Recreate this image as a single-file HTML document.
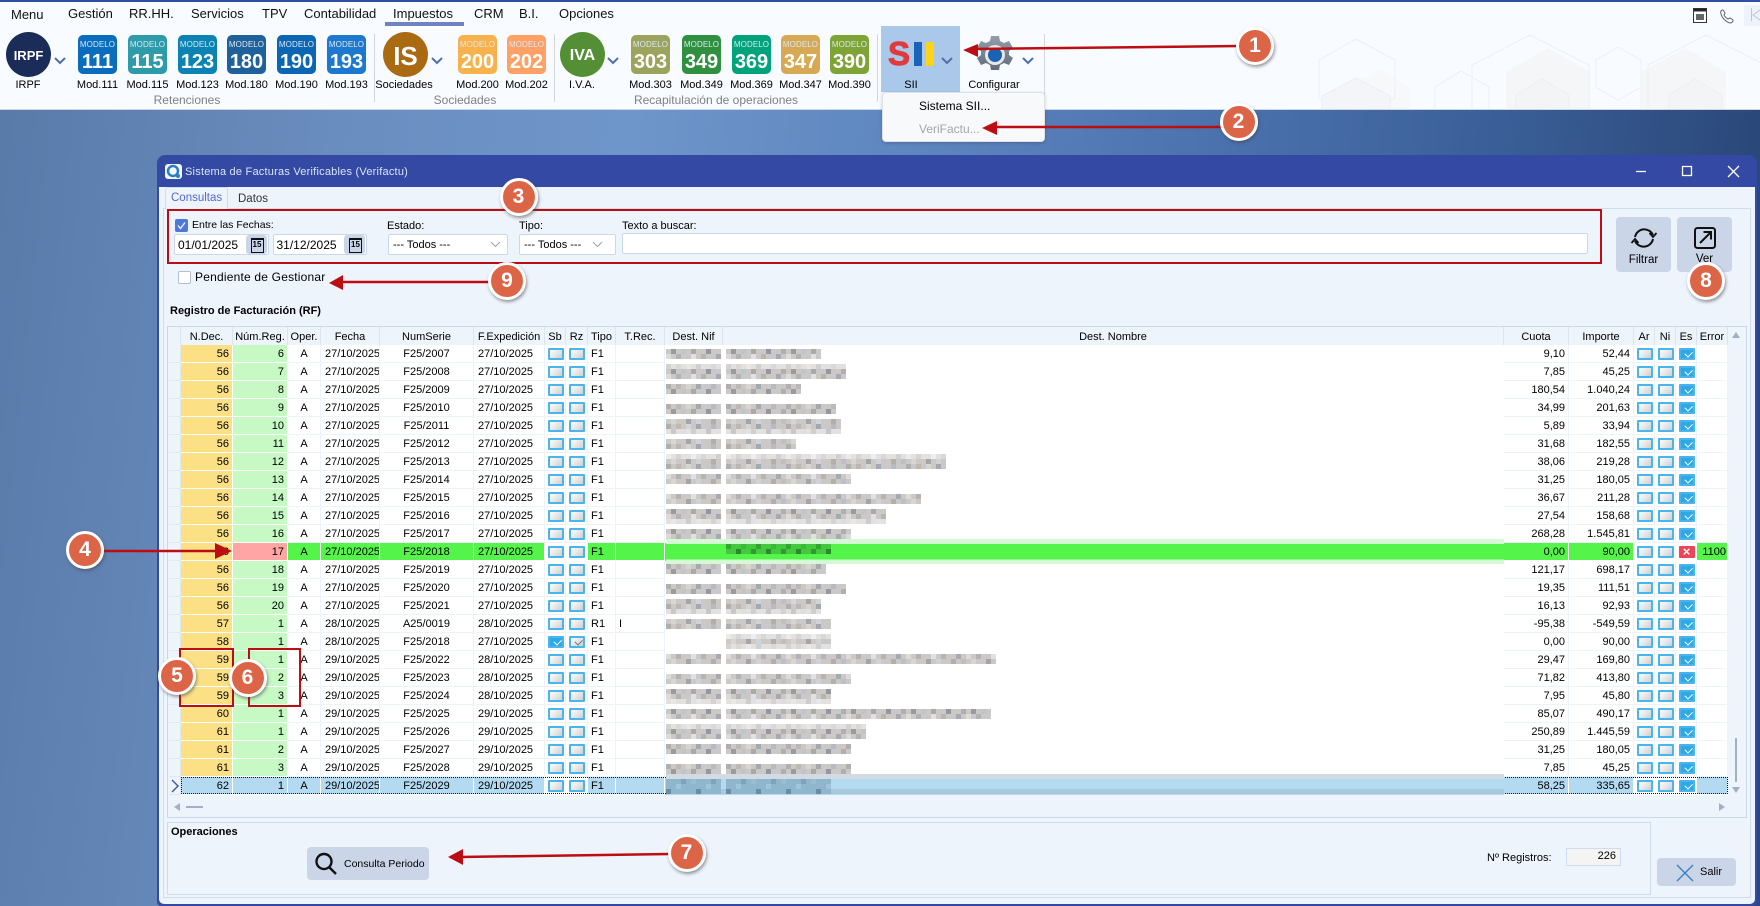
<!DOCTYPE html>
<html lang="es"><head><meta charset="utf-8"><title>Verifactu</title>
<style>
*{box-sizing:border-box;margin:0;padding:0}
html,body{width:1760px;height:906px;overflow:hidden}
body{position:relative;font-family:"Liberation Sans",sans-serif;font-size:11px;color:#000;background:linear-gradient(96deg,#587aa9 0,#6a8dbf 350px,#6f96ca 640px,#5f87c0 900px,#4b71ad 1240px,#3a5f98 1500px,#2b487a 1760px)}
.a{position:absolute}
.t{position:absolute;white-space:nowrap}
#rb{left:0;top:0;width:1760px;height:110px;background:#f8fbff;border-top:2px solid #2f4fa0;border-bottom:1px solid #cfd6e0}
.m{position:absolute;top:6px;font-size:13px;line-height:16px;color:#111;white-space:nowrap}
.ti{position:absolute;top:35px;width:39px;height:39px;border-radius:5px;color:#fff;text-align:center;overflow:hidden}
.ti s{display:block;text-decoration:none;font-size:8px;line-height:10px;margin-top:5px;color:#dbe8f3;letter-spacing:.1px}
.ti b{display:block;font-size:20px;line-height:22px;margin-top:1px}
.lb{position:absolute;top:78px;width:60px;text-align:center;font-size:11px;line-height:14px;color:#000;white-space:nowrap}
.gl{position:absolute;top:93px;font-size:12px;line-height:14px;color:#808080;text-align:center;white-space:nowrap}
.sp{position:absolute;top:34px;width:1px;height:68px;background:#d3d7dc}
.ci{position:absolute;top:32px;width:45px;height:45px;border-radius:50%;color:#fff;font-weight:bold;text-align:center;line-height:48px}
#win{left:157px;top:155px;width:1600px;height:751px;background:#3349a3;border-radius:8px 8px 4px 4px}
#cw{left:158.5px;top:187px;width:1596px;height:717px;background:#eef4fc;border-radius:0 0 5px 5px}
.in{position:absolute;background:#fff;border:1px solid #cbd8ea;border-radius:2px;height:21px;font-size:12px;line-height:20px;padding-left:3px;white-space:nowrap}
.cal{position:absolute;width:21px;height:19px;top:235px;background:#cbd5e8;border-radius:3px}
.cal:after{content:"15";position:absolute;left:5px;top:3px;width:11px;height:12px;border:1px solid #111;border-top-width:2px;font-size:8px;line-height:9px;text-align:center;font-weight:bold}
.btn{position:absolute;background:#cbd5e8;border-radius:4px}
#g{left:167px;top:326px;width:1580px;height:492px;border:1px solid #ccd9ea}
table{position:absolute;left:169px;top:327px;border-collapse:separate;border-spacing:0;table-layout:fixed;width:1559px;font-size:11px}
th{height:18px;font-weight:normal;background:#eef4fc;border-right:1px solid #dbe5f2;line-height:16px;padding:2px 0 0;white-space:nowrap;overflow:hidden}
td{height:18px;background:#fff;border-right:1px solid #ecf3fb;border-bottom:1px solid #ecf3fb;line-height:15px;padding:2px 0 0;text-align:center;white-space:nowrap;overflow:hidden;position:relative}
td:nth-child(1){background:#eef4fc;border-color:#dfe8f4}
td:nth-child(2){background:#fbe085;border-color:#fff;text-align:right;padding-right:3px}
td:nth-child(3){background:#c6f9c4;border-color:#fff;text-align:right;padding-right:3px}
td:nth-child(5),td:nth-child(7){text-align:left;padding-left:4px}
td:nth-child(10),td:nth-child(11){text-align:left;padding-left:3px}
td:nth-child(12),td:nth-child(13){border:0}
td:nth-child(14),td:nth-child(15){text-align:right;padding-right:3px}
td:nth-child(19){text-align:right;padding-right:1px}
td i{position:absolute;left:2.5px;top:3px;width:16px;height:12px;border:2px solid #4ab5ec;border-radius:1px;background:linear-gradient(135deg,#fff,#cfcfcf)}
.k{background:#2fa8e8!important}
.k:after,.gk:after{content:"";position:absolute;left:4.5px;top:1px;width:6px;height:3.5px;border-left:1.5px solid #fff;border-bottom:1.5px solid #fff;transform:rotate(-45deg)}
.gk:after{border-color:#777}
.x{background:#ef4456!important;border-color:#ef4456!important;color:#fff;font-style:normal;font-weight:bold;font-size:13px;line-height:8px;text-align:center}
.g td{background:#55f44b;border-color:#fff}
.g td:nth-child(1){background:#eef4fc;border-color:#dfe8f4}
.g td:nth-child(2){background:#fbe085}
.g td:nth-child(3){background:#ffa5a5}
.g td:nth-child(8),.g td:nth-child(9),.g td:nth-child(16),.g td:nth-child(17),.g td:nth-child(18){background:#fff}
.s td{background:#b3daf1;border-color:#fff}
.s td:nth-child(1){background:#eef4fc;border-color:#dfe8f4}
.s td:nth-child(8),.s td:nth-child(9),.s td:nth-child(16),.s td:nth-child(17),.s td:nth-child(18){background:#fff}
.rb{position:absolute;border:2px solid #bc0d12}
.n{position:absolute;width:38px;height:38px;border-radius:50%;background:#dc6547;border:3px solid #fff;box-shadow:1px 2px 3px rgba(70,70,70,.55);color:#fff;font-weight:bold;font-size:21px;line-height:32px;text-align:center}
</style></head><body>

<div class="a" id="rb"></div>
<svg class="a" style="left:0;top:0" width="1760" height="110" viewBox="0 0 1760 110" fill="none">
<defs><clipPath id="cp"><rect x="0" y="2" width="1760" height="107"/></clipPath></defs>
<g clip-path="url(#cp)" stroke="#eceff3" stroke-width="1">
<polygon points="1380,70 1410,88 1410,120 1380,140 1350,120 1350,88" fill="#f6f8fa" stroke="none"/>
<polygon points="1356,39 1395,60 1395,98 1356,120 1319,98 1319,60"/>
<polygon points="1356,78 1390,96 1390,130 1356,150 1322,130 1322,96" fill="#f3f5f8"/>
<polygon points="1548,48 1590,72 1590,120 1548,144 1506,120 1506,72" fill="#f4f6f8" stroke="none"/>
<polygon points="1530,35 1589,65 1589,125 1530,155 1472,125 1472,65"/>
<polygon points="1461,71 1489,87 1489,120 1461,136 1435,120 1435,87"/>
<polygon points="1542,79 1569,95 1569,125 1542,141 1516,125 1516,95" fill="#f2f4f6"/>
<polygon points="1618,47 1641,60 1641,87 1618,100 1596,87 1596,60"/>
<polygon points="1686,48 1726,72 1726,120 1686,144 1640,120 1640,72" fill="#f4f6f8" stroke="none"/>
<polygon points="1706,35 1765,65 1765,125 1706,155 1648,125 1648,65"/>
<polygon points="1695,79 1722,95 1722,125 1695,141 1669,125 1669,95" fill="#f2f4f6"/>
</g></svg>

<div class="m" style="left:11px;top:7px">Menu</div><div class="m" style="left:68px">Gestión</div><div class="m" style="left:129px">RR.HH.</div><div class="m" style="left:191px">Servicios</div><div class="m" style="left:262px">TPV</div><div class="m" style="left:304px">Contabilidad</div><div class="m" style="left:393px">Impuestos</div><div class="m" style="left:474px">CRM</div><div class="m" style="left:519px">B.I.</div><div class="m" style="left:559px">Opciones</div>
<div class="a" style="left:385px;top:22px;width:79px;height:3.5px;background:#6f82c4"></div>

<div class="ci" style="left:6px;background:#1a2c57;font-size:13px">IRPF</div>
<div class="ti" style="left:78px;background:#0a6cbd"><s>MODELO</s><b>111</b></div>
<div class="ti" style="left:128px;background:#2d9ba9"><s>MODELO</s><b>115</b></div>
<div class="ti" style="left:178px;background:#0b84b5"><s>MODELO</s><b>123</b></div>
<div class="ti" style="left:227px;background:#1f619a"><s>MODELO</s><b>180</b></div>
<div class="ti" style="left:277px;background:#0b66b3"><s>MODELO</s><b>190</b></div>
<div class="ti" style="left:327px;background:#1c79cf"><s>MODELO</s><b>193</b></div>
<div class="ci" style="left:383px;background:#a96a12;font-size:26px">IS</div>
<div class="ti" style="left:458px;background:#f7b24c"><s>MODELO</s><b>200</b></div>
<div class="ti" style="left:507px;background:#ffa064"><s>MODELO</s><b>202</b></div>
<div class="ci" style="left:560px;background:#558f35;font-size:16px">IVA</div>
<div class="ti" style="left:631px;background:#9ba35c"><s>MODELO</s><b>303</b></div>
<div class="ti" style="left:682px;background:#2f9040"><s>MODELO</s><b>349</b></div>
<div class="ti" style="left:732px;background:#00a37c"><s>MODELO</s><b>369</b></div>
<div class="ti" style="left:781px;background:#d7a955"><s>MODELO</s><b>347</b></div>
<div class="ti" style="left:830px;background:#7ea436"><s>MODELO</s><b>390</b></div>

<div class="lb" style="left:-2px">IRPF</div><div class="lb" style="left:67.5px">Mod.111</div><div class="lb" style="left:117.5px">Mod.115</div><div class="lb" style="left:167.5px">Mod.123</div><div class="lb" style="left:216.5px">Mod.180</div><div class="lb" style="left:266.5px">Mod.190</div><div class="lb" style="left:316.5px">Mod.193</div><div class="lb" style="left:374px">Sociedades</div><div class="lb" style="left:447.5px">Mod.200</div><div class="lb" style="left:496.5px">Mod.202</div><div class="lb" style="left:552px">I.V.A.</div><div class="lb" style="left:620.5px">Mod.303</div><div class="lb" style="left:671.5px">Mod.349</div><div class="lb" style="left:721.5px">Mod.369</div><div class="lb" style="left:770.5px">Mod.347</div><div class="lb" style="left:819.5px">Mod.390</div>
<div class="gl" style="left:127px;width:120px">Retenciones</div><div class="gl" style="left:405px;width:120px">Sociedades</div><div class="gl" style="left:616px;width:200px">Recapitulación de operaciones</div>
<div class="sp" style="left:374px"></div><div class="sp" style="left:554px"></div><div class="sp" style="left:877px"></div><div class="sp" style="left:1044px"></div>

<div class="a" style="left:881px;top:26px;width:79px;height:66px;background:#a9c8ea"></div>
<div class="t" style="left:888px;top:36px;font-size:33px;font-weight:bold;line-height:36px;color:#e03a3f;-webkit-text-stroke:1px #e03a3f">S</div>
<div class="a" style="left:914px;top:42px;width:7.5px;height:24px;background:#1a63b8"></div>
<div class="a" style="left:926px;top:42px;width:8px;height:24px;background:#ffd21a"></div>
<div class="lb" style="left:881px">SII</div>
<div class="lb" style="left:964px">Configurar</div>
<svg class="a" style="left:0;top:0" width="1100" height="110" fill="none" stroke="#4f6fa8" stroke-width="2">
<path d="M55 58l5 5 5-5M432 58l5 5 5-5M608 58l5 5 5-5M942 58l5 5 5-5M1023 58l5 5 5-5"/>
</svg>
<svg class="a" style="left:975px;top:35px" width="40" height="40" viewBox="0 0 40 40">
<defs><linearGradient id="gr" x1="0" y1="0" x2="0" y2="1"><stop offset="0" stop-color="#949da9"/><stop offset="1" stop-color="#626c7a"/></linearGradient></defs>
<path fill="url(#gr)" d="M16 1h8l1 5 4 2 5-2 4 7-4 3v4l4 3-4 7-5-2-4 2-1 5h-8l-1-5-4-2-5 2-4-7 4-3v-4l-4-3 4-7 5 2 4-2z"/>
<circle cx="20" cy="20" r="10" fill="#e5e8ec"/><circle cx="20" cy="20" r="7" fill="#1b62b0"/>
</svg>

<div class="a" style="left:881.5px;top:92px;width:163px;height:50px;background:#f8f9fb;border:1px solid #e0e2e6;border-radius:4px;box-shadow:0 1px 3px rgba(0,0,0,.2)"></div>
<div class="t" style="left:919px;top:99px;font-size:12px;line-height:14px">Sistema SII...</div>
<div class="t" style="left:919px;top:122px;font-size:12px;line-height:14px;color:#a5a5a5">VeriFactu...</div>

<svg class="a" style="left:1690px;top:5px" width="70" height="24" fill="none" stroke="#333">
<rect x="3.5" y="3.5" width="13" height="14" fill="#fff"/><rect x="3.5" y="3.5" width="13" height="2.5" fill="#222"/><rect x="6" y="9" width="8" height="6" fill="#666" stroke="none"/>
<path d="M33 5c-2 0-3 2-2 4 1 4 5 8 9 9 2 0 3-1 3-3l-3-2-2 1c-2-1-3-2-4-4l1-2z" stroke="#666"/>
<rect x="54" y="-2" width="16" height="23" fill="#eef2fa" stroke="none"/><path d="M61.5 3v13M70 5l-7 5 7 5" stroke="#b9c5d8"/>
</svg>

<div class="a" id="win"></div><div class="a" id="cw"></div>
<svg class="a" style="left:165px;top:164px" width="18" height="16"><rect width="17" height="15" rx="3" fill="#f4f8fc"/><circle cx="8" cy="7" r="5" fill="none" stroke="#2a7fc0" stroke-width="2.5"/><circle cx="13" cy="12" r="2" fill="#2a7fc0"/></svg>
<div class="t" style="left:185px;top:165px;font-size:11px;line-height:14px;color:#dbe5f5;letter-spacing:.22px">Sistema de Facturas Verificables (Verifactu)</div>
<svg class="a" style="left:1630px;top:160px" width="120" height="24" fill="none" stroke="#fff" stroke-width="1.3">
<path d="M6 11.5h10"/><rect x="52.5" y="6.5" width="9" height="9"/><path d="M98 6l11 11M109 6l-11 11"/>
</svg>

<div class="a" style="left:162.5px;top:208px;width:1588.5px;height:690px;border:1px solid #cfdcee"></div>
<div class="a" style="left:165px;top:187px;width:63px;height:22px;background:#eef4fc;border:1px solid #cfdcee;border-bottom:0;border-radius:3px 3px 0 0"></div>
<div class="t" style="left:171px;top:191px;font-size:11.5px;line-height:14px;color:#5468d8">Consultas</div>
<div class="t" style="left:238px;top:192px;font-size:11.5px;line-height:14px;color:#333">Datos</div>

<div class="a" style="left:175px;top:219px;width:13px;height:13px;background:#4f78d8;border-radius:2px"></div>
<svg class="a" style="left:175px;top:219px" width="13" height="13"><path d="M3 6.5l2.5 3L10 3.5" fill="none" stroke="#fff" stroke-width="1.2"/></svg>
<div class="t" style="left:192px;top:218px;font-size:10.5px;line-height:14px">Entre las Fechas:</div>
<div class="in" style="left:174px;top:234px;width:94.5px">01/01/2025</div><div class="cal" style="left:245.5px"></div>
<div class="in" style="left:272.5px;top:234px;width:94px">31/12/2025</div><div class="cal" style="left:344px"></div>
<div class="t" style="left:387px;top:219px;font-size:11px;line-height:14px">Estado:</div>
<div class="in" style="left:388px;top:234px;width:120px;font-size:11px;padding-left:4px">--- Todos ---</div>
<div class="t" style="left:519px;top:219px;font-size:11px;line-height:14px">Tipo:</div>
<div class="in" style="left:519px;top:234px;width:97px;font-size:11px;padding-left:4px">--- Todos ---</div>
<svg class="a" style="left:490px;top:240px" width="120" height="10" fill="none" stroke="#9aa3ae"><path d="M1 2l4.5 4.5L10 2M103 2l4.5 4.5L112 2"/></svg>
<div class="t" style="left:622px;top:219px;font-size:11px;line-height:14px">Texto a buscar:</div>
<div class="in" style="left:622px;top:233px;width:966px"></div>

<div class="btn" style="left:1616px;top:217px;width:55px;height:55px"></div>
<div class="btn" style="left:1677px;top:217px;width:55px;height:55px"></div>
<svg class="a" style="left:1628px;top:224px" width="100" height="30" fill="none" stroke="#111" stroke-width="2">
<path d="M7 13A9.5 9.5 0 0 1 25 11"/><path d="M25 15A9.5 9.5 0 0 1 7 17"/>
<path d="M21.5 9l3.5 4 3.5-4M3.5 19l3.5-4 3.5 4" stroke-width="1.8"/>
<rect x="67" y="4" width="20" height="20" rx="2.5"/><path d="M72 19L83 8M75.5 8H83v7.5"/>
</svg>
<div class="t" style="left:1616px;top:253px;width:55px;text-align:center;font-size:11.5px;line-height:14px">Filtrar</div>
<div class="t" style="left:1677px;top:252px;width:55px;text-align:center;font-size:11.5px;line-height:14px">Ver</div>

<div class="a" style="left:178px;top:271px;width:13px;height:13px;background:#fff;border:1px solid #b4bfcf;border-radius:2px"></div>
<div class="t" style="left:195px;top:270px;font-size:12px;line-height:14px;letter-spacing:.2px">Pendiente de Gestionar</div>
<div class="t" style="left:170px;top:304px;font-size:11px;font-weight:bold;line-height:14px">Registro de Facturación (RF)</div>

<div class="a" id="g"></div>
<table>
<colgroup><col style="width:12px"><col style="width:52px"><col style="width:55px"><col style="width:33px"><col style="width:59px"><col style="width:94px"><col style="width:71px"><col style="width:21px"><col style="width:22px"><col style="width:28px"><col style="width:49px"><col style="width:58px"><col style="width:781px"><col style="width:65px"><col style="width:65px"><col style="width:21px"><col style="width:21px"><col style="width:21px"><col style="width:31px"></colgroup>
<tr><th></th><th>N.Dec.</th><th>Núm.Reg.</th><th>Oper.</th><th>Fecha</th><th>NumSerie</th><th>F.Expedición</th><th>Sb</th><th>Rz</th><th>Tipo</th><th>T.Rec.</th><th>Dest. Nif</th><th>Dest. Nombre</th><th>Cuota</th><th>Importe</th><th>Ar</th><th>Ni</th><th>Es</th><th>Error</th></tr>
<tr><td></td><td>56</td><td>6</td><td>A</td><td>27/10/2025</td><td>F25/2007</td><td>27/10/2025</td><td><i></i></td><td><i></i></td><td>F1</td><td></td><td></td><td></td><td>9,10</td><td>52,44</td><td><i></i></td><td><i></i></td><td><i class="k"></i></td><td></td></tr>
<tr><td></td><td>56</td><td>7</td><td>A</td><td>27/10/2025</td><td>F25/2008</td><td>27/10/2025</td><td><i></i></td><td><i></i></td><td>F1</td><td></td><td></td><td></td><td>7,85</td><td>45,25</td><td><i></i></td><td><i></i></td><td><i class="k"></i></td><td></td></tr>
<tr><td></td><td>56</td><td>8</td><td>A</td><td>27/10/2025</td><td>F25/2009</td><td>27/10/2025</td><td><i></i></td><td><i></i></td><td>F1</td><td></td><td></td><td></td><td>180,54</td><td>1.040,24</td><td><i></i></td><td><i></i></td><td><i class="k"></i></td><td></td></tr>
<tr><td></td><td>56</td><td>9</td><td>A</td><td>27/10/2025</td><td>F25/2010</td><td>27/10/2025</td><td><i></i></td><td><i></i></td><td>F1</td><td></td><td></td><td></td><td>34,99</td><td>201,63</td><td><i></i></td><td><i></i></td><td><i class="k"></i></td><td></td></tr>
<tr><td></td><td>56</td><td>10</td><td>A</td><td>27/10/2025</td><td>F25/2011</td><td>27/10/2025</td><td><i></i></td><td><i></i></td><td>F1</td><td></td><td></td><td></td><td>5,89</td><td>33,94</td><td><i></i></td><td><i></i></td><td><i class="k"></i></td><td></td></tr>
<tr><td></td><td>56</td><td>11</td><td>A</td><td>27/10/2025</td><td>F25/2012</td><td>27/10/2025</td><td><i></i></td><td><i></i></td><td>F1</td><td></td><td></td><td></td><td>31,68</td><td>182,55</td><td><i></i></td><td><i></i></td><td><i class="k"></i></td><td></td></tr>
<tr><td></td><td>56</td><td>12</td><td>A</td><td>27/10/2025</td><td>F25/2013</td><td>27/10/2025</td><td><i></i></td><td><i></i></td><td>F1</td><td></td><td></td><td></td><td>38,06</td><td>219,28</td><td><i></i></td><td><i></i></td><td><i class="k"></i></td><td></td></tr>
<tr><td></td><td>56</td><td>13</td><td>A</td><td>27/10/2025</td><td>F25/2014</td><td>27/10/2025</td><td><i></i></td><td><i></i></td><td>F1</td><td></td><td></td><td></td><td>31,25</td><td>180,05</td><td><i></i></td><td><i></i></td><td><i class="k"></i></td><td></td></tr>
<tr><td></td><td>56</td><td>14</td><td>A</td><td>27/10/2025</td><td>F25/2015</td><td>27/10/2025</td><td><i></i></td><td><i></i></td><td>F1</td><td></td><td></td><td></td><td>36,67</td><td>211,28</td><td><i></i></td><td><i></i></td><td><i class="k"></i></td><td></td></tr>
<tr><td></td><td>56</td><td>15</td><td>A</td><td>27/10/2025</td><td>F25/2016</td><td>27/10/2025</td><td><i></i></td><td><i></i></td><td>F1</td><td></td><td></td><td></td><td>27,54</td><td>158,68</td><td><i></i></td><td><i></i></td><td><i class="k"></i></td><td></td></tr>
<tr><td></td><td>56</td><td>16</td><td>A</td><td>27/10/2025</td><td>F25/2017</td><td>27/10/2025</td><td><i></i></td><td><i></i></td><td>F1</td><td></td><td></td><td></td><td>268,28</td><td>1.545,81</td><td><i></i></td><td><i></i></td><td><i class="k"></i></td><td></td></tr>
<tr class="g"><td></td><td>56</td><td>17</td><td>A</td><td>27/10/2025</td><td>F25/2018</td><td>27/10/2025</td><td><i></i></td><td><i></i></td><td>F1</td><td></td><td></td><td></td><td>0,00</td><td>90,00</td><td><i></i></td><td><i></i></td><td><i class="x">×</i></td><td>1100</td></tr>
<tr><td></td><td>56</td><td>18</td><td>A</td><td>27/10/2025</td><td>F25/2019</td><td>27/10/2025</td><td><i></i></td><td><i></i></td><td>F1</td><td></td><td></td><td></td><td>121,17</td><td>698,17</td><td><i></i></td><td><i></i></td><td><i class="k"></i></td><td></td></tr>
<tr><td></td><td>56</td><td>19</td><td>A</td><td>27/10/2025</td><td>F25/2020</td><td>27/10/2025</td><td><i></i></td><td><i></i></td><td>F1</td><td></td><td></td><td></td><td>19,35</td><td>111,51</td><td><i></i></td><td><i></i></td><td><i class="k"></i></td><td></td></tr>
<tr><td></td><td>56</td><td>20</td><td>A</td><td>27/10/2025</td><td>F25/2021</td><td>27/10/2025</td><td><i></i></td><td><i></i></td><td>F1</td><td></td><td></td><td></td><td>16,13</td><td>92,93</td><td><i></i></td><td><i></i></td><td><i class="k"></i></td><td></td></tr>
<tr><td></td><td>57</td><td>1</td><td>A</td><td>28/10/2025</td><td>A25/0019</td><td>28/10/2025</td><td><i></i></td><td><i></i></td><td>R1</td><td>I</td><td></td><td></td><td>-95,38</td><td>-549,59</td><td><i></i></td><td><i></i></td><td><i class="k"></i></td><td></td></tr>
<tr><td></td><td>58</td><td>1</td><td>A</td><td>28/10/2025</td><td>F25/2018</td><td>27/10/2025</td><td><i class="k"></i></td><td><i class="gk"></i></td><td>F1</td><td></td><td></td><td></td><td>0,00</td><td>90,00</td><td><i></i></td><td><i></i></td><td><i class="k"></i></td><td></td></tr>
<tr><td></td><td>59</td><td>1</td><td>A</td><td>29/10/2025</td><td>F25/2022</td><td>28/10/2025</td><td><i></i></td><td><i></i></td><td>F1</td><td></td><td></td><td></td><td>29,47</td><td>169,80</td><td><i></i></td><td><i></i></td><td><i class="k"></i></td><td></td></tr>
<tr><td></td><td>59</td><td>2</td><td>A</td><td>29/10/2025</td><td>F25/2023</td><td>28/10/2025</td><td><i></i></td><td><i></i></td><td>F1</td><td></td><td></td><td></td><td>71,82</td><td>413,80</td><td><i></i></td><td><i></i></td><td><i class="k"></i></td><td></td></tr>
<tr><td></td><td>59</td><td>3</td><td>A</td><td>29/10/2025</td><td>F25/2024</td><td>28/10/2025</td><td><i></i></td><td><i></i></td><td>F1</td><td></td><td></td><td></td><td>7,95</td><td>45,80</td><td><i></i></td><td><i></i></td><td><i class="k"></i></td><td></td></tr>
<tr><td></td><td>60</td><td>1</td><td>A</td><td>29/10/2025</td><td>F25/2025</td><td>29/10/2025</td><td><i></i></td><td><i></i></td><td>F1</td><td></td><td></td><td></td><td>85,07</td><td>490,17</td><td><i></i></td><td><i></i></td><td><i class="k"></i></td><td></td></tr>
<tr><td></td><td>61</td><td>1</td><td>A</td><td>29/10/2025</td><td>F25/2026</td><td>29/10/2025</td><td><i></i></td><td><i></i></td><td>F1</td><td></td><td></td><td></td><td>250,89</td><td>1.445,59</td><td><i></i></td><td><i></i></td><td><i class="k"></i></td><td></td></tr>
<tr><td></td><td>61</td><td>2</td><td>A</td><td>29/10/2025</td><td>F25/2027</td><td>29/10/2025</td><td><i></i></td><td><i></i></td><td>F1</td><td></td><td></td><td></td><td>31,25</td><td>180,05</td><td><i></i></td><td><i></i></td><td><i class="k"></i></td><td></td></tr>
<tr><td></td><td>61</td><td>3</td><td>A</td><td>29/10/2025</td><td>F25/2028</td><td>29/10/2025</td><td><i></i></td><td><i></i></td><td>F1</td><td></td><td></td><td></td><td>7,85</td><td>45,25</td><td><i></i></td><td><i></i></td><td><i class="k"></i></td><td></td></tr>
<tr class="s"><td></td><td>62</td><td>1</td><td>A</td><td>29/10/2025</td><td>F25/2029</td><td>29/10/2025</td><td><i></i></td><td><i></i></td><td>F1</td><td></td><td></td><td></td><td>58,25</td><td>335,65</td><td><i></i></td><td><i></i></td><td><i class="k"></i></td><td></td></tr>
</table>
<div class="a" style="left:181px;top:777px;width:1547px;height:17px;border:1px dotted #111"></div>

<svg class="a" style="left:0;top:0" width="1760" height="906" viewBox="0 0 1760 906">
<defs>
<pattern id="p" x="1" y="4" width="60" height="20" patternUnits="userSpaceOnUse" shape-rendering="crispEdges">
<rect width="60" height="20" fill="#c3c1bf"/>
<rect x="5" width="5" height="5" fill="#a5a3a3"/><rect x="15" width="5" height="5" fill="#b5aea6"/><rect x="25" width="5" height="5" fill="#d2cfca"/><rect x="35" width="5" height="5" fill="#9a9ca4"/><rect x="50" width="5" height="5" fill="#adb2b8"/>
<rect y="5" width="5" height="5" fill="#a8a29f"/><rect x="10" y="5" width="5" height="5" fill="#8f8c8e"/><rect x="20" y="5" width="5" height="5" fill="#b7bcc4"/><rect x="30" y="5" width="5" height="5" fill="#a19c96"/><rect x="45" y="5" width="5" height="5" fill="#868892"/>
<rect x="5" y="10" width="5" height="5" fill="#d8d5d2"/><rect x="15" y="10" width="5" height="5" fill="#aaa8a8"/><rect x="30" y="10" width="5" height="5" fill="#dcdde0"/><rect x="40" y="10" width="5" height="5" fill="#b0aaa4"/><rect x="55" y="10" width="5" height="5" fill="#9c9ea6"/>
<rect x="0" y="15" width="5" height="5" fill="#b4b6ba"/><rect x="10" y="15" width="5" height="5" fill="#d4d0cb"/><rect x="25" y="15" width="5" height="5" fill="#99979a"/><rect x="35" y="15" width="5" height="5" fill="#c9ccd2"/><rect x="50" y="15" width="5" height="5" fill="#a9a39d"/>
</pattern>
<pattern id="pg" x="1" y="4" width="30" height="10" patternUnits="userSpaceOnUse" shape-rendering="crispEdges">
<rect width="30" height="10" fill="#43c83e"/><rect x="5" width="5" height="5" fill="#33a531"/><rect x="20" width="5" height="5" fill="#3ab838"/><rect y="5" width="5" height="5" fill="#2f9b2e"/><rect x="15" y="5" width="5" height="5" fill="#2a8a2a"/>
</pattern>
<pattern id="pb" x="1" y="4" width="30" height="15" patternUnits="userSpaceOnUse" shape-rendering="crispEdges">
<rect width="30" height="15" fill="#8fb6cc"/><rect x="5" y="5" width="5" height="5" fill="#6b8ca6"/><rect x="15" width="5" height="5" fill="#a0c4da"/><rect x="20" y="10" width="5" height="5" fill="#7fa3ba"/><rect y="10" width="5" height="5" fill="#9cbccf"/>
</pattern>
</defs>
<g fill="url(#p)" fill-opacity=".88" shape-rendering="crispEdges">
<rect x="666" y="349" width="55" height="10"/><rect x="726" y="349" width="95" height="10"/>
<rect x="666" y="364" width="55" height="15"/><rect x="726" y="364" width="120" height="15"/>
<rect x="666" y="384" width="55" height="10"/><rect x="726" y="384" width="75" height="10"/>
<rect x="666" y="404" width="55" height="10"/><rect x="726" y="404" width="110" height="10"/>
<rect x="666" y="419" width="55" height="15"/><rect x="726" y="419" width="115" height="15"/>
<rect x="666" y="439" width="55" height="10"/><rect x="726" y="439" width="70" height="10"/>
<rect x="666" y="454" width="55" height="15"/><rect x="726" y="454" width="220" height="15"/>
<rect x="666" y="474" width="55" height="10"/><rect x="726" y="474" width="125" height="10"/>
<rect x="666" y="494" width="55" height="10"/><rect x="726" y="494" width="195" height="10"/>
<rect x="666" y="509" width="55" height="15"/><rect x="726" y="509" width="160" height="15"/>
<rect x="666" y="529" width="55" height="10"/><rect x="726" y="529" width="125" height="10"/>
<rect x="666" y="564" width="55" height="10"/><rect x="726" y="564" width="100" height="10"/>
<rect x="666" y="584" width="55" height="10"/><rect x="726" y="584" width="120" height="10"/>
<rect x="666" y="599" width="55" height="15"/><rect x="726" y="599" width="95" height="15"/>
<rect x="666" y="619" width="55" height="10"/><rect x="726" y="619" width="105" height="10"/>
<rect x="726" y="634" width="105" height="15"/>
<rect x="666" y="654" width="55" height="10"/><rect x="726" y="654" width="270" height="10"/>
<rect x="666" y="674" width="55" height="10"/><rect x="726" y="674" width="125" height="10"/>
<rect x="666" y="689" width="55" height="15"/><rect x="726" y="689" width="105" height="15"/>
<rect x="666" y="709" width="55" height="10"/><rect x="726" y="709" width="265" height="10"/>
<rect x="666" y="724" width="55" height="15"/><rect x="726" y="724" width="140" height="15"/>
<rect x="666" y="744" width="55" height="10"/><rect x="726" y="744" width="125" height="10"/>
<rect x="666" y="764" width="55" height="10"/><rect x="726" y="764" width="125" height="10"/>
</g>
<g fill="#fff" fill-opacity=".45" shape-rendering="crispEdges">
<rect x="666" y="364" width="180" height="5"/><rect x="666" y="429" width="175" height="5"/><rect x="666" y="454" width="280" height="5"/><rect x="666" y="519" width="220" height="5"/><rect x="666" y="609" width="155" height="5"/><rect x="726" y="634" width="105" height="5"/><rect x="726" y="644" width="105" height="5"/><rect x="666" y="699" width="165" height="5"/><rect x="666" y="724" width="200" height="5"/>
</g>
<rect x="666" y="539" width="838" height="5" fill="#d5f8d5"/><rect x="666" y="544" width="838" height="15.5" fill="#55f44b"/><rect x="666" y="559.5" width="838" height="4.5" fill="#d5f8d5"/>
<rect x="726" y="544" width="105" height="10" fill="url(#pg)"/>
<rect x="666" y="774" width="838" height="5" fill="#d2dbe2"/><rect x="666" y="789" width="838" height="5" fill="#a9c8dc"/>
<rect x="666" y="779" width="55" height="15" fill="url(#pb)"/><rect x="726" y="779" width="105" height="15" fill="url(#pb)"/>
<path d="M172 780l6 6-6 6" fill="none" stroke="#3b52a8" stroke-width="1.4"/>
<path d="M1736 332l-4 6h8z M1736 793l-4-6h8z M174 807l6-4v8z M1725 807l-6-4v8z" fill="#9fb0c8"/>
<rect x="1735" y="738" width="2" height="44" fill="#9fb0c8"/><rect x="186" y="806" width="17" height="2" fill="#9fb0c8"/>
</svg>

<div class="a" style="left:167px;top:822px;width:1484px;height:73px;border:1px solid #cfdcee"></div>
<div class="t" style="left:171px;top:825px;font-size:11px;font-weight:bold;line-height:14px">Operaciones</div>
<div class="btn" style="left:307px;top:847px;width:122px;height:33px"></div>
<svg class="a" style="left:312px;top:850px" width="28" height="28" fill="none" stroke="#111" stroke-width="2.4"><circle cx="12" cy="11.5" r="7.5"/><path d="M17.5 17.5L24 24"/></svg>
<div class="t" style="left:344px;top:857px;font-size:10.5px;line-height:14px">Consulta Periodo</div>
<div class="t" style="left:1487px;top:851px;font-size:11px;line-height:14px">Nº Registros:</div>
<div class="a" style="left:1566px;top:848px;width:55px;height:18px;background:#f4f4f4;border:1px solid #cfdcee;text-align:right;padding-right:4px;line-height:15px;font-size:11px">226</div>
<div class="btn" style="left:1657px;top:858px;width:79px;height:28px"></div>
<svg class="a" style="left:1676px;top:864px" width="18" height="18" stroke="#3b7fc4" stroke-width="1.4"><path d="M1 1l16 16M17 1L1 17"/></svg>
<div class="t" style="left:1700px;top:865px;font-size:11px;line-height:14px">Salir</div>

<div class="rb" style="left:167px;top:209px;width:1435px;height:55px"></div>
<div class="rb" style="left:178.5px;top:648px;width:55px;height:59px"></div>
<div class="rb" style="left:247.5px;top:648px;width:53px;height:59px"></div>

<svg class="a" style="left:0;top:0" width="1760" height="906" fill="#bc0d12" stroke="none">
<path d="M1240 46L975 49" stroke="#bc0d12" stroke-width="2.5"/><polygon points="963,50 978,44 978,57"/>
<path d="M1222 127H995" stroke="#bc0d12" stroke-width="2.5"/><polygon points="982,128 997,121 997,135"/>
<path d="M492 282H340" stroke="#bc0d12" stroke-width="2.5"/><polygon points="329,283 343,275 343,290"/>
<path d="M670 854L460 857" stroke="#bc0d12" stroke-width="2.5"/><polygon points="448,857 463,849 463,865"/>
<path d="M100 551H218" stroke="#bc0d12" stroke-width="2.5"/><polygon points="232,551 215,543 215,559"/>
</svg>

<div class="n" style="left:1236px;top:27px">1</div>
<div class="n" style="left:1219.5px;top:103px">2</div>
<div class="n" style="left:499.5px;top:178px">3</div>
<div class="n" style="left:66px;top:531px">4</div>
<div class="n" style="left:158px;top:657px">5</div>
<div class="n" style="left:228.5px;top:659px">6</div>
<div class="n" style="left:667.5px;top:834px">7</div>
<div class="n" style="left:1687px;top:262px">8</div>
<div class="n" style="left:488px;top:262px">9</div>
</body></html>
